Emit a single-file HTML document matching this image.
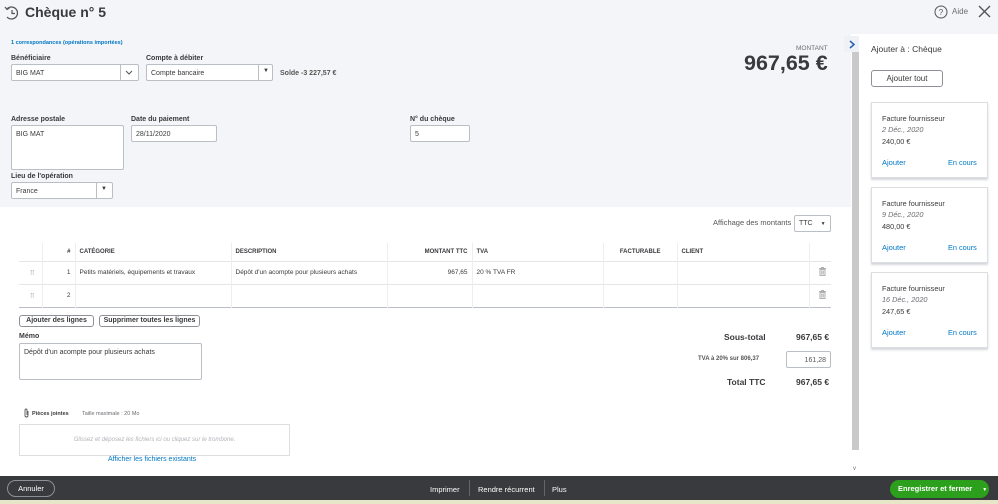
<!DOCTYPE html>
<html><head><meta charset="utf-8"><style>
*{box-sizing:border-box;margin:0;padding:0}
body{width:998px;height:504px;overflow:hidden;position:relative;font-family:"Liberation Sans",sans-serif;color:#393a3d;background:#f4f5f8;font-size:7px}
.a{position:absolute}
.lbl{font-size:7px;font-weight:bold;color:#393a3d}
.inp{position:absolute;background:#fff;border:1px solid #babec5;border-radius:2px;font-size:7px;padding:5px 4px;color:#393a3d}
.btn{position:absolute;background:#fff;border:1px solid #8d9096;border-radius:3px;font-size:7px;font-weight:bold;text-align:center}
.card{position:absolute;left:871px;width:117px;height:76px;background:#fff;border:1px solid #dcdee2;box-shadow:0 2px 2px #d4d7dc}
.card div{position:absolute;left:10px}
th{font-size:6px;font-weight:bold;text-align:left;padding-left:4px;height:18px;border-right:1px solid #eceef1}
td{font-size:6.5px;height:23px;padding-left:4px;border-right:1px solid #eceef1;border-top:1px solid #e4e6ea}
</style></head><body>
<svg class="a" style="left:4px;top:5px" width="16" height="16" viewBox="0 0 16 16"><path d="M3 4A6 6 0 1 1 3 12" fill="none" stroke="#555" stroke-width="1.3"/><path d="M1 2L3 4.5L5.5 3" fill="none" stroke="#555" stroke-width="1.2"/><path d="M8 5v3.5h3" fill="none" stroke="#555" stroke-width="1.2"/></svg>
<div class="a" style="left:25px;top:4px;font-size:14px;font-weight:bold;color:#393a3d">Chèque n° 5</div>
<svg class="a" style="left:934px;top:5px" width="14" height="14"><circle cx="7" cy="7" r="6" fill="none" stroke="#555" stroke-width="1"/><text x="7" y="10" font-size="8" text-anchor="middle" fill="#555" font-family="Liberation Sans">?</text></svg>
<div class="a" style="left:952px;top:7px;font-size:8px;color:#6b6c72">Aide</div>
<svg class="a" style="left:978px;top:5px" width="13" height="13"><path d="M1 1L12 12M12 1L1 12" stroke="#555" stroke-width="1.4"/></svg>

<div class="a" style="left:11px;top:40px;font-size:5.5px;color:#0077c5;font-weight:bold">1 correspondances (opérations importées)</div>
<div class="a lbl" style="left:11px;top:55px">Bénéficiaire</div>
<div class="inp" style="left:11px;top:64px;width:128px;height:17px">BIG MAT</div>
<div class="a" style="left:120px;top:65px;width:1px;height:15px;background:#babec5"></div>
<svg class="a" style="left:125px;top:70px" width="8" height="6"><path d="M1 1L4 4L7 1" fill="none" stroke="#555"/></svg>
<div class="a lbl" style="left:146px;top:55px">Compte à débiter</div>
<div class="inp" style="left:146px;top:64px;width:127px;height:17px">Compte bancaire</div>
<div class="a" style="left:258px;top:65px;width:1px;height:15px;background:#babec5"></div>
<div class="a" style="left:263px;top:68px;font-size:6px">▼</div>
<div class="a" style="left:280px;top:70px;font-size:7px;font-weight:bold;color:#555">Solde -3 227,57 €</div>

<div class="a" style="left:796px;top:45px;font-size:6.5px;color:#6b6c72">MONTANT</div>
<div class="a" style="left:744px;top:51px;font-size:21.5px;font-weight:bold;color:#393a3d">967,65 €</div>

<div class="a lbl" style="left:11px;top:116px">Adresse postale</div>
<div class="inp" style="left:11px;top:125px;width:113px;height:45px">BIG MAT</div>
<div class="a lbl" style="left:131px;top:116px">Date du paiement</div>
<div class="inp" style="left:131px;top:125px;width:86px;height:17px">28/11/2020</div>
<div class="a lbl" style="left:410px;top:116px">N° du chèque</div>
<div class="inp" style="left:410px;top:125px;width:60px;height:17px">5</div>
<div class="a lbl" style="left:11px;top:173px">Lieu de l'opération</div>
<div class="inp" style="left:11px;top:182px;width:102px;height:17px">France</div>
<div class="a" style="left:96px;top:183px;width:1px;height:15px;background:#babec5"></div>
<div class="a" style="left:101px;top:186px;font-size:6px">▼</div>

<div class="a" style="left:0;top:207px;width:851px;height:269px;background:#fff"></div>
<div class="a" style="left:713px;top:218px;font-size:7.5px;color:#555">Affichage des montants</div>
<div class="inp" style="left:794px;top:215px;width:37px;height:17px;padding:4px">TTC <span style="font-size:5px;margin-left:6px">▼</span></div>

<table class="a" style="left:19px;top:243px;width:812px;border-collapse:collapse;border-bottom:1px solid #babec5">
<tr style="border-bottom:1px solid #babec5"><th style="width:23px"></th><th style="width:33px;text-align:right;padding-right:4px">#</th><th style="width:156px">CATÉGORIE</th><th style="width:156px">DESCRIPTION</th><th style="width:85px;text-align:right;padding-right:4px">MONTANT TTC</th><th style="width:131px">TVA</th><th style="width:74px;text-align:right;padding-right:16px">FACTURABLE</th><th style="width:132px">CLIENT</th><th style="border:none"></th></tr>
<tr><td style="color:#aaa;text-align:center">⠿</td><td style="text-align:right;padding-right:4px">1</td><td>Petits matériels, équipements et travaux</td><td>Dépôt d'un acompte pour plusieurs achats</td><td style="text-align:right;padding-right:4px">967,65</td><td>20 % TVA FR</td><td></td><td></td><td style="border-right:none;text-align:center"><svg width="7" height="9"><path d="M0 1.5h7M2.5 1.5V0.5h2v1M1 2.5h5v6H1zM2.8 3.5v4M4.2 3.5v4" fill="none" stroke="#999" stroke-width="0.8"/></svg></td></tr>
<tr><td style="color:#aaa;text-align:center">⠿</td><td style="text-align:right;padding-right:4px">2</td><td></td><td></td><td></td><td></td><td></td><td></td><td style="border-right:none;text-align:center"><svg width="7" height="9"><path d="M0 1.5h7M2.5 1.5V0.5h2v1M1 2.5h5v6H1zM2.8 3.5v4M4.2 3.5v4" fill="none" stroke="#999" stroke-width="0.8"/></svg></td></tr>
</table>

<div class="btn" style="left:19px;top:315px;width:75px;height:12px;line-height:10px">Ajouter des lignes</div>
<div class="btn" style="left:99px;top:315px;width:101px;height:12px;line-height:10px">Supprimer toutes les lignes</div>
<div class="a lbl" style="left:19px;top:333px">Mémo</div>
<div class="inp" style="left:19px;top:343px;width:183px;height:37px">Dépôt d'un acompte pour plusieurs achats</div>

<div class="a" style="left:724px;top:332px;font-size:8.5px;font-weight:bold">Sous-total</div>
<div class="a" style="left:796px;top:332px;font-size:8.5px;font-weight:bold">967,65 €</div>
<div class="a" style="left:698px;top:356px;font-size:6px;font-weight:bold;color:#555">TVA à 20% sur 806,37</div>
<div class="inp" style="left:786px;top:351px;width:45px;height:17px;text-align:right;color:#555">161,28</div>
<div class="a" style="left:727px;top:377px;font-size:8.5px;font-weight:bold">Total TTC</div>
<div class="a" style="left:796px;top:377px;font-size:8.5px;font-weight:bold">967,65 €</div>

<svg class="a" style="left:23px;top:408px" width="7" height="10"><path d="M5 3v4.5a1.5 1.5 0 0 1-3 0V2a1 1 0 0 1 2 0v5" fill="none" stroke="#555" stroke-width="0.9"/></svg>
<div class="a" style="left:32px;top:411px;font-size:5.5px;font-weight:bold">Pièces jointes</div>
<div class="a" style="left:82px;top:411px;font-size:5.5px;color:#6b6c72">Taille maximale : 20 Mo</div>
<div class="a" style="left:19px;top:424px;width:271px;height:32px;border:1px solid #dcdee2;text-align:center;line-height:30px;font-size:6px;font-style:italic;color:#b0b3b8">Glissez et déposez les fichiers ici ou cliquez sur le trombone.</div>
<div class="a" style="left:108px;top:456px;font-size:7px;color:#0077c5">Afficher les fichiers existants</div>

<div class="a" style="left:851px;top:34px;width:9px;height:442px;background:#fff"></div>
<div class="a" style="left:852px;top:52px;width:7px;height:398px;background:#c9c9c9"></div>
<div class="a" style="left:844px;top:36px;width:15px;height:16px;background:#eef1f6"></div>
<svg class="a" style="left:848px;top:40px" width="8" height="9"><path d="M2 1L6 4.5L2 8" fill="none" stroke="#2a5fb0" stroke-width="1.5"/></svg>
<div class="a" style="left:853px;top:466px;font-size:6px;color:#777">v</div>

<div class="a" style="left:860px;top:34px;width:138px;height:442px;background:#fff"></div>
<div class="a" style="left:871px;top:44px;font-size:8.5px;color:#393a3d">Ajouter à : Chèque</div>
<div class="btn" style="left:871px;top:70px;width:72px;height:17px;line-height:15px;font-size:8px;font-weight:normal;color:#393a3d">Ajouter tout</div>
<div class="card" style="top:102px"><div style="top:11px;font-size:7.3px">Facture fournisseur</div><div style="top:22px;font-size:7.3px;font-style:italic;color:#6b6c72">2 Déc., 2020</div><div style="top:34px;font-size:7.3px">240,00 €</div><div style="top:55px;font-size:7.5px;color:#0077c5">Ajouter</div><div style="left:76px;top:55px;font-size:7.3px;color:#0077c5">En cours</div></div>
<div class="card" style="top:187px"><div style="top:11px;font-size:7.3px">Facture fournisseur</div><div style="top:22px;font-size:7.3px;font-style:italic;color:#6b6c72">9 Déc., 2020</div><div style="top:34px;font-size:7.3px">480,00 €</div><div style="top:55px;font-size:7.5px;color:#0077c5">Ajouter</div><div style="left:76px;top:55px;font-size:7.3px;color:#0077c5">En cours</div></div>
<div class="card" style="top:272px"><div style="top:11px;font-size:7.3px">Facture fournisseur</div><div style="top:22px;font-size:7.3px;font-style:italic;color:#6b6c72">16 Déc., 2020</div><div style="top:34px;font-size:7.3px">247,65 €</div><div style="top:55px;font-size:7.5px;color:#0077c5">Ajouter</div><div style="left:76px;top:55px;font-size:7.3px;color:#0077c5">En cours</div></div>

<div class="a" style="left:0;top:476px;width:998px;height:24px;background:#393a3d"></div>
<div class="a" style="left:0;top:500px;width:998px;height:4px;background:#e8e6c8"></div>
<div class="a" style="left:7px;top:480px;width:48px;height:17px;border:1px solid #8d9096;border-radius:9px;color:#fff;font-size:7.5px;text-align:center;line-height:15px">Annuler</div>
<div class="a" style="left:430px;top:485px;color:#fff;font-size:7.5px">Imprimer</div>
<div class="a" style="left:469px;top:480px;width:1px;height:16px;background:#666"></div>
<div class="a" style="left:478px;top:485px;color:#fff;font-size:7.5px">Rendre récurrent</div>
<div class="a" style="left:544px;top:480px;width:1px;height:16px;background:#666"></div>
<div class="a" style="left:552px;top:485px;color:#fff;font-size:7.5px">Plus</div>
<div class="a" style="left:890px;top:480px;width:99px;height:18px;border-radius:9px;background:#2ca01c;color:#fff;font-size:7.5px;font-weight:bold;line-height:18px;padding-left:8px">Enregistrer et fermer <span style="font-size:5px;margin-left:8px">▼</span></div>
</body></html>
